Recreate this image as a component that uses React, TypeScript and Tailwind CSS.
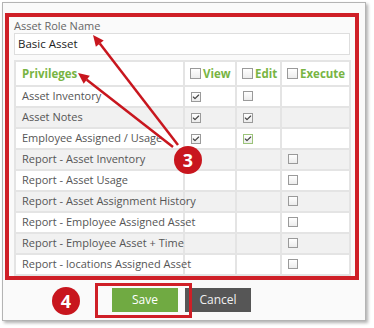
import { Check } from 'lucide-react';

type Row = { name: string; view?: boolean | null; edit?: boolean | null; exec?: boolean | null; focus?: boolean };

const rows: Row[] = [
  { name: 'Asset Inventory', view: true, edit: false },
  { name: 'Asset Notes', view: true, edit: true },
  { name: 'Employee Assigned / Usage', view: true, edit: true, focus: true },
  { name: 'Report - Asset Inventory', exec: false },
  { name: 'Report - Asset Usage', exec: false },
  { name: 'Report - Asset Assignment History', exec: false },
  { name: 'Report - Employee Assigned Asset', exec: false },
  { name: 'Report - Employee Asset + Time', exec: false },
  { name: 'Report - locations Assigned Asset', exec: false },
];

function Box({ checked, focus, big }: { checked?: boolean; focus?: boolean; big?: boolean }) {
  return (
    <span
      className={`inline-flex items-center justify-center border bg-gradient-to-b from-white to-[#ececec] ${
        big ? 'w-[11px] h-[11px]' : 'w-[10px] h-[10px]'
      } ${focus ? 'border-[#9cc47a]' : 'border-[#9a9a9a]'}`}
    >
      {checked && <Check className="w-[8px] h-[8px] text-[#444]" strokeWidth={3.5} />}
    </span>
  );
}

export default function App() {
  return (
    <div className="relative w-[374px] h-[328px] bg-white overflow-hidden font-['Open_Sans',sans-serif]">
      {/* dialog */}
      <div className="ml-[2px] mt-[2px] w-[364px] h-[319px] border border-[#b4b4b4] bg-[#fafafa] shadow-[2px_2px_3px_rgba(0,0,0,0.3)] pl-[2px] pt-[10px]">
        {/* form, framed by the annotation */}
        <div className="w-[354px] h-[267px] border-4 border-[#cf1f27] px-[5px] pt-[2px]">
          <div className="text-[11px] leading-[14px] text-[#666]">Asset Role Name</div>
          <div className="w-[336px] h-[22px] border border-[#dedede] bg-white flex items-center pl-[3px] text-[11.5px] text-[#222]">
            Basic Asset
          </div>
          <table className="mt-[5px] w-[335px] table-fixed border-collapse text-[11px] text-[#555]">
            <colgroup>
              <col className="w-[169px]" />
              <col className="w-[52px]" />
              <col className="w-[45px]" />
              <col className="w-[69px]" />
            </colgroup>
            <thead>
              <tr className="h-[25px] bg-white">
                <th className="border-2 border-[#e4e4e4] text-left pl-[6px] font-bold text-[#78b443] text-[11.5px]">Privileges</th>
                <th className="border-2 border-[#e4e4e4] text-left pl-[5px]">
                  <span className="flex items-center gap-[2px] font-bold text-[#78b443] text-[11.5px]">
                    <Box big />
                    View
                  </span>
                </th>
                <th className="border-2 border-[#e4e4e4] text-left pl-[5px]">
                  <span className="flex items-center gap-[2px] font-bold text-[#78b443] text-[11.5px]">
                    <Box big />
                    Edit
                  </span>
                </th>
                <th className="border-2 border-[#e4e4e4] text-left pl-[5px]">
                  <span className="flex items-center gap-[2px] font-bold text-[#78b443] text-[11.5px]">
                    <Box big />
                    Execute
                  </span>
                </th>
              </tr>
            </thead>
            <tbody>
              {rows.map((r, i) => (
                <tr key={r.name} className={`h-[21px] ${i % 2 === 1 ? 'bg-[#f1f1f1]' : 'bg-white'}`}>
                  <td className="border-2 border-[#e4e4e4] pl-[6px] whitespace-nowrap">{r.name}</td>
                  <td className="border-2 border-[#e4e4e4] pl-[6px] leading-none">
                    {r.view !== undefined && <Box checked={!!r.view} />}
                  </td>
                  <td className="border-2 border-[#e4e4e4] pl-[6px] leading-none">
                    {r.edit !== undefined && <Box checked={!!r.edit} focus={r.focus} />}
                  </td>
                  <td className="border-2 border-[#e4e4e4] pl-[6px] leading-none">
                    {r.exec !== undefined && <Box checked={!!r.exec} />}
                  </td>
                </tr>
              ))}
            </tbody>
          </table>
        </div>

        {/* buttons */}
        <div className="mt-[8px] ml-[107px] flex gap-[7px]">
          <button className="w-[66px] h-[24px] bg-[#70aa42] text-white text-[12px]">Save</button>
          <button className="w-[66px] h-[24px] bg-[#565656] text-[#f0f0f0] text-[12px]">Cancel</button>
        </div>
      </div>

      {/* annotations */}
      <svg className="absolute inset-0 pointer-events-none" width="374" height="328">
        <line x1="178" y1="145" x2="99.8" y2="43.6" stroke="#c8161e" strokeWidth="2.5" />
        <polygon points="93,35 103.7,40.5 95.9,46.7" fill="#c8161e" />
        <line x1="173" y1="147" x2="86.7" y2="79.7" stroke="#c8161e" strokeWidth="2.5" />
        <polygon points="78,73 89.8,75.7 83.7,83.7" fill="#c8161e" />
      </svg>
      <div className="absolute left-[174px] top-[146px] w-[28px] h-[28px] rounded-full bg-[#c8161e] text-white text-[18px] font-bold flex items-center justify-center">
        3
      </div>
      <div className="absolute left-[52px] top-[287px] w-[28px] h-[28px] rounded-full bg-[#c8161e] text-white text-[18px] font-bold flex items-center justify-center">
        4
      </div>
      <div className="absolute left-[95px] top-[283px] w-[97px] h-[35px] border-[3px] border-[#cf1f27]" />
    </div>
  );
}
